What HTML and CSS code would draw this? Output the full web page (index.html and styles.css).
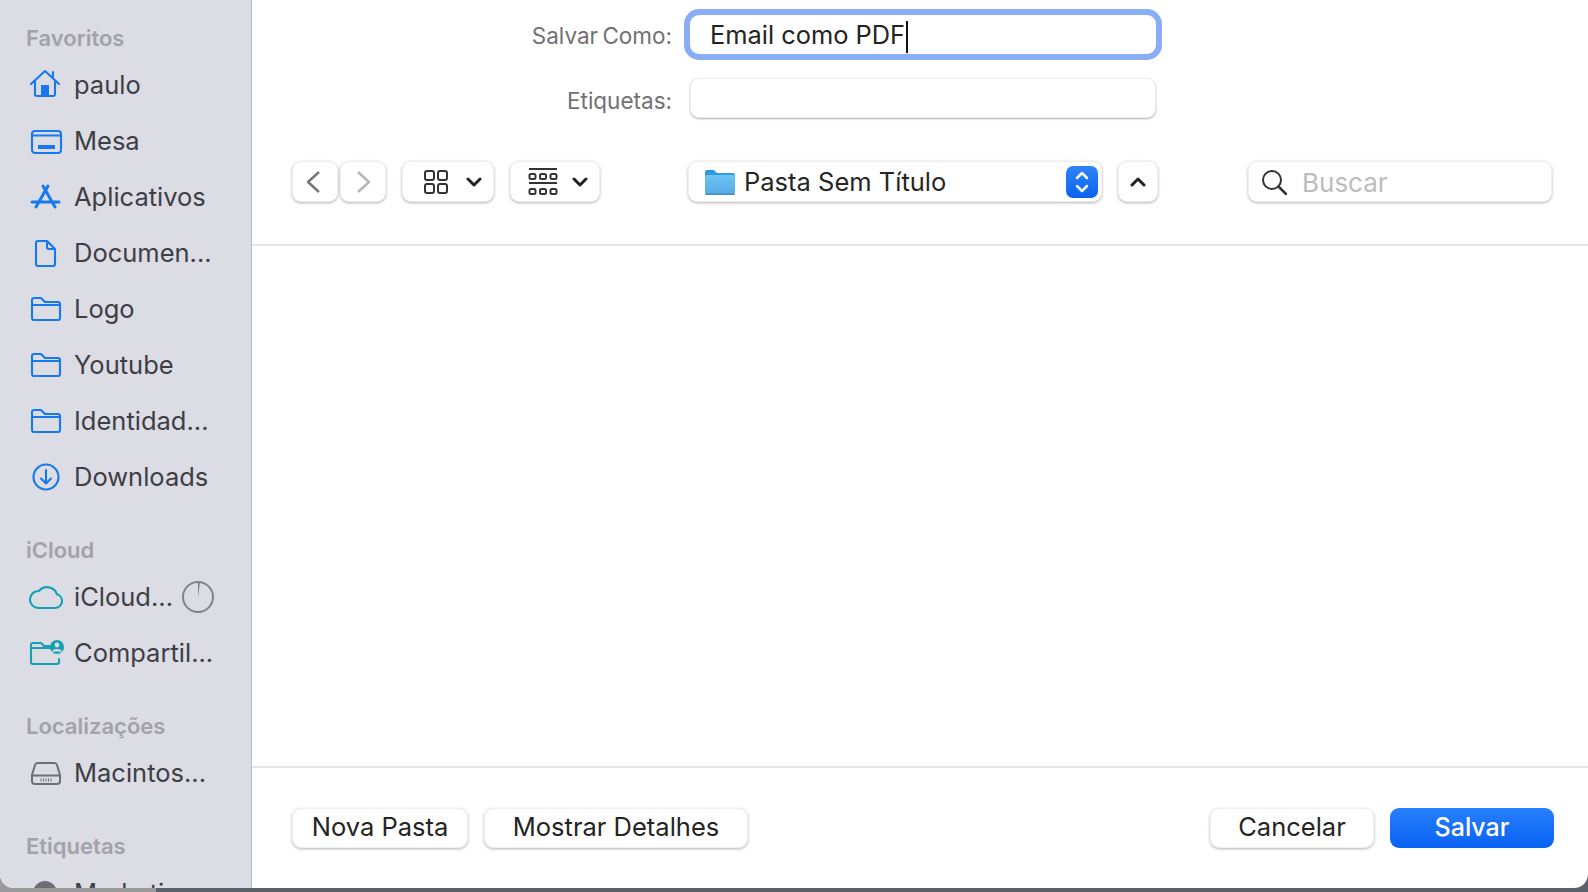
FILE: index.html
```html
<!DOCTYPE html>
<html lang="pt">
<head>
<meta charset="utf-8">
<title>Salvar Como</title>
<link rel="stylesheet" href="styles.css">
</head>
<body>
<div class="window">
  <aside class="sidebar">
    <section class="group">
      <h2 class="group-title">Favoritos</h2>
      <div class="item"><svg class="ico" viewBox="0 0 36 36"><path d="M4 17 18 4l14 13M8 14v13a2 2 0 0 0 2 2h16a2 2 0 0 0 2-2V14M26 10V5"/><rect class="solid" x="14" y="18" width="8" height="11"/></svg><span>paulo</span></div>
      <div class="item"><svg class="ico" viewBox="0 0 36 36"><rect x="5" y="8" width="29" height="22" rx="3"/><path d="M5 12.500h29"/><rect class="solid" x="11" y="22" width="17" height="4"/></svg><span>Mesa</span></div>
      <div class="item"><svg class="ico thick" viewBox="0 0 36 36"><path d="M16 7 28 28M21 7 9 28M5 23h27"/></svg><span>Aplicativos</span></div>
      <div class="item"><svg class="ico" viewBox="0 0 36 36"><path d="M11 6h9l8 8v15a2 2 0 0 1-2 2H11a2 2 0 0 1-2-2V8a2 2 0 0 1 2-2ZM20 6v6a2 2 0 0 0 2 2h6"/></svg><span>Documen...</span></div>
      <div class="item"><svg class="ico" viewBox="0 0 36 36"><path d="M5 14V9a2 2 0 0 1 2-2h7l4 4h13a2 2 0 0 1 2 2v14a2 2 0 0 1-2 2H7a2 2 0 0 1-2-2V14h28"/></svg><span>Logo</span></div>
      <div class="item"><svg class="ico" viewBox="0 0 36 36"><path d="M5 14V9a2 2 0 0 1 2-2h7l4 4h13a2 2 0 0 1 2 2v14a2 2 0 0 1-2 2H7a2 2 0 0 1-2-2V14h28"/></svg><span>Youtube</span></div>
      <div class="item"><svg class="ico" viewBox="0 0 36 36"><path d="M5 14V9a2 2 0 0 1 2-2h7l4 4h13a2 2 0 0 1 2 2v14a2 2 0 0 1-2 2H7a2 2 0 0 1-2-2V14h28"/></svg><span>Identidad...</span></div>
      <div class="item"><svg class="ico" viewBox="0 0 36 36"><circle cx="19" cy="18" r="12.500"/><path d="M19 11v13M14 19.500l5 5 5-5"/></svg><span>Downloads</span></div>
    </section>
    <section class="group">
      <h2 class="group-title">iCloud</h2>
      <div class="item"><svg class="ico teal" viewBox="0 0 36 36"><path d="M11 29h17a7 7 0 0 0 2-13.700A10.500 10.500 0 0 0 12 12 8.500 8.500 0 0 0 11 29Z"/></svg><span>iCloud...</span><svg class="quota" viewBox="0 0 34 34"><circle cx="17" cy="17" r="15"/><path class="wedge" d="M17 2.500h2L17 17Z"/></svg></div>
      <div class="item"><svg class="ico teal wide" viewBox="0 0 40 36"><path d="M24 13H4v-3a2 2 0 0 1 2-2h8l3 3h7M4 13v14a2 2 0 0 0 2 2h24a2 2 0 0 0 2-2v-3"/><circle class="solid" cx="30" cy="12" r="7"/><circle class="hole" cx="30" cy="10" r="2.400"/><path class="hole-line" d="M26 16.500c1-2.500 7-2.500 8 0"/></svg><span>Compartil...</span></div>
    </section>
    <section class="group">
      <h2 class="group-title">Localizações</h2>
      <div class="item"><svg class="ico gray" viewBox="0 0 36 36"><path d="M11 8h16a3 3 0 0 1 3 2l3 10v6a3 3 0 0 1-3 3H8a3 3 0 0 1-3-3v-6l3-10a3 3 0 0 1 3-2ZM5 20.500h28"/><path class="vents" d="M14 23.500v3M16.500 23.500v3M19 23.500v3M21.500 23.500v3M24 23.500v3"/></svg><span>Macintos...</span></div>
    </section>
    <section class="group">
      <h2 class="group-title">Etiquetas</h2>
      <div class="item"><span class="tag-dot"></span><span>Marketing</span></div>
    </section>
  </aside>

  <main class="panel">
    <header class="head">
      <div class="form-row first">
        <label class="form-label">Salvar Como:</label>
        <div class="field focused">Email como PDF<span class="caret"></span></div>
      </div>
      <div class="form-row second">
        <label class="form-label">Etiquetas:</label>
        <div class="field"></div>
      </div>
      <div class="toolbar">
        <div class="nav-pair">
          <div class="ctl nav"><svg class="glyph" width="16" height="24" viewBox="0 0 16 24"><path class="back" d="M12 2 1 12l11 10"/></svg></div>
          <div class="ctl nav"><svg class="glyph" width="16" height="24" viewBox="0 0 16 24"><path class="fwd" d="M3 2l11 10L3 22"/></svg></div>
        </div>
        <div class="ctl view view-a">
          <svg class="glyph" width="26" height="26" viewBox="0 0 26 26"><rect class="line" x="2" y="2" width="9" height="9" rx="2"/><rect class="line" x="15" y="2" width="9" height="9" rx="2"/><rect class="line" x="2" y="15" width="9" height="9" rx="2"/><rect class="line" x="15" y="15" width="9" height="9" rx="2"/></svg>
          <svg class="glyph" width="16" height="10" viewBox="0 0 16 10"><path class="chev" d="M2 2l6 6 6-6"/></svg>
        </div>
        <div class="ctl view view-b">
          <svg class="glyph" width="30" height="30" viewBox="0 0 30 30"><path class="line" d="M1 2h28M1 16h28"/><rect class="line" x="1.500" y="7" width="6" height="5" rx="1.500"/><rect class="line" x="12" y="7" width="6" height="5" rx="1.500"/><rect class="line" x="22.500" y="7" width="6" height="5" rx="1.500"/><rect class="line" x="1.500" y="22" width="6" height="5" rx="1.500"/><rect class="line" x="12" y="22" width="6" height="5" rx="1.500"/><rect class="line" x="22.500" y="22" width="6" height="5" rx="1.500"/></svg>
          <svg class="glyph" width="16" height="10" viewBox="0 0 16 10"><path class="chev" d="M2 2l6 6 6-6"/></svg>
        </div>
        <div class="ctl popup">
          <svg class="glyph" width="30" height="26" viewBox="0 0 30 26"><defs><linearGradient id="fold" x1="0" y1="0" x2="0" y2="1"><stop offset="0" stop-color="#6cc4f4"/><stop offset="1" stop-color="#58ace8"/></linearGradient></defs><path fill="#2f9bdc" d="M0 3a2 2 0 0 1 2-2h7l3 3h16a2 2 0 0 1 2 2v4H0Z"/><rect fill="url(#fold)" x="0" y="6" width="30" height="19" rx="2"/><rect fill="#4a94c8" x="0" y="24" width="30" height="2" rx="1"/></svg>
          <span class="popup-text">Pasta Sem Título</span>
          <span class="stepper"><svg width="16" height="26" viewBox="0 0 16 26"><path class="step" d="M3 9l5-5 5 5M3 17l5 5 5-5"/></svg></span>
        </div>
        <div class="ctl up"><svg class="glyph" width="16" height="10" viewBox="0 0 16 10"><path class="chev" d="M2 8l6-6 6 6"/></svg></div>
        <div class="ctl search">
          <svg class="glyph" width="26" height="26" viewBox="0 0 26 26"><circle class="line" cx="11" cy="11" r="9"/><path class="line round" d="M17.500 17.500 25 25"/></svg>
          <span class="search-text">Buscar</span>
        </div>
      </div>
    </header>
    <div class="listing"></div>
    <footer class="foot">
      <button class="btn new-folder">Nova Pasta</button>
      <button class="btn details">Mostrar Detalhes</button>
      <button class="btn cancel">Cancelar</button>
      <button class="btn save">Salvar</button>
    </footer>
  </main>
</div>
</body>
</html>
```

FILE: styles.css
```css
* { box-sizing: border-box; }
html, body { margin: 0; height: 100%; }
body {
  height: 892px;
  overflow: hidden;
  font-family: Inter, "Noto Sans", sans-serif;
  background: linear-gradient(to right, #9b9b9b 156px, #5b626c 156px);
}
.window {
  display: flex;
  height: 888px;
  background: #fff;
  border-radius: 0 0 14px 14px;
  overflow: hidden;
}
.sidebar {
  width: 252px;
  flex: none;
  background: #dcdce4;
  border-right: 1px solid #bdbdc8;
  padding: 24px 0 0 27px;
  color: #3e3e45;
  overflow: hidden;
}
.group + .group { margin-top: 31px; }
.group-title {
  margin: 0 0 5px -1px;
  height: 28px;
  line-height: 28px;
  font-size: 22px;
  font-weight: 600;
  color: #a2a2aa;
}
.item {
  display: flex;
  align-items: center;
  gap: 11px;
  height: 56px;
  font-size: 25.500px;
  white-space: nowrap;
}
.item > span:last-of-type { margin-top: -2px; }
.ico {
  width: 36px;
  height: 36px;
  flex: none;
  fill: none;
  stroke: #1878ee;
  stroke-width: 2.100;
  stroke-linejoin: round;
  stroke-linecap: round;
}
.ico.thick { stroke-width: 3; }
.ico .solid { fill: #1878ee; stroke: none; }
.ico.teal { stroke: #16a0b4; }
.ico.teal .solid { fill: #16a0b4; }
.ico.wide { width: 40px; margin-right: -4px; }
.ico .hole { fill: #dcdce4; stroke: none; }
.ico .hole-line { fill: #dcdce4; stroke: #dcdce4; stroke-width: 1.500; }
.ico.gray { stroke: #6e6e74; stroke-width: 2; }
.ico .vents { stroke-width: 1; stroke-linecap: butt; }
.quota {
  width: 34px;
  height: 34px;
  margin: -1px 0 0 -3px;
  flex: none;
  fill: none;
  stroke: #828288;
  stroke-width: 2;
}
.quota .wedge { fill: #828288; stroke: none; }
.tag-dot {
  width: 24px;
  height: 24px;
  margin: 0 6px;
  border-radius: 50%;
  background: #6e6e74;
  flex: none;
}
.panel {
  flex: 1;
  display: flex;
  flex-direction: column;
  min-width: 0;
}
.head {
  height: 246px;
  flex: none;
  border-bottom: 2px solid #e6e6e6;
  padding-top: 15px;
}
.form-row { display: flex; align-items: center; gap: 18px; }
.form-row.second { margin-top: 24px; }
.form-label {
  width: 420px;
  text-align: right;
  font-size: 22.500px;
  word-spacing: -2px;
  color: #717171;
}
.first .form-label { margin-top: 2px; }
.second .form-label { margin-top: 4px; }
.field {
  width: 466px;
  height: 40px;
  background: #fff;
  border: 1px solid #ececec;
  border-radius: 9px;
  box-shadow: 0 1px 2px rgba(0, 0, 0, .32);
}
.field.focused {
  height: 39px;
  border: none;
  border-radius: 9px;
  box-shadow: 0 0 0 6px #8aaef5;
  padding-left: 20px;
  font-size: 25.400px;
  line-height: 39px;
  color: #232323;
}
.caret {
  display: inline-block;
  width: 2px;
  height: 32px;
  margin-left: 1px;
  vertical-align: middle;
  background: #111;
}
.toolbar {
  display: flex;
  align-items: stretch;
  height: 41px;
  margin-top: 43px;
  padding: 0 36px 0 40px;
}
.ctl {
  display: flex;
  align-items: center;
  background: #fff;
  border: 1px solid #efefef;
  border-radius: 9px;
  box-shadow: 0 1px 3px rgba(0, 0, 0, .3);
}
.glyph { flex: none; fill: none; stroke-linejoin: round; }
.line { stroke: #333; stroke-width: 2; fill: none; }
.round { stroke-linecap: round; stroke-width: 2.500; }
.chev { stroke: #222; stroke-width: 3; fill: none; stroke-linecap: round; stroke-linejoin: round; }
.back { stroke: #777; stroke-width: 2.500; }
.fwd { stroke: #b6b6b6; stroke-width: 2.500; }
.nav-pair { display: flex; gap: 2px; }
.nav { width: 46px; justify-content: center; }
.view { margin-left: 16px; justify-content: space-between; }
.view-a { width: 92px; padding: 0 11px 0 20px; }
.view-b { width: 90px; padding: 0 11px 0 17px; }
.popup {
  width: 414px;
  margin-left: 88px;
  padding: 0 3px 0 16px;
  font-size: 25.500px;
  color: #262626;
}
.popup-text { margin: -1px 0 0 9px; flex: 1; }
.stepper {
  display: flex;
  align-items: center;
  justify-content: center;
  width: 32px;
  height: 32px;
  border-radius: 7px;
  background: linear-gradient(#2f84f8, #0a62f0);
}
.step { stroke: #fff; stroke-width: 2.500; fill: none; stroke-linecap: round; stroke-linejoin: round; }
.up { width: 40px; margin-left: 16px; justify-content: center; }
.search {
  width: 304px;
  margin-left: auto;
  padding-left: 12px;
  font-size: 26px;
  color: #bcbcbc;
}
.search-text { margin: 2px 0 0 15px; }
.listing { flex: 1; background: #fff; }
.foot {
  display: flex;
  gap: 16px;
  height: 122px;
  flex: none;
  border-top: 2px solid #e6e6e6;
  padding: 40px 34px 40px 40px;
}
.btn {
  height: 40px;
  padding: 0 0 3px;
  font: 25.500px Inter, "Noto Sans", sans-serif;
  color: #242424;
  background: #fff;
  border: 1px solid #efefef;
  border-radius: 9px;
  box-shadow: 0 1px 3px rgba(0, 0, 0, .3);
}
.new-folder { width: 176px; }
.details { width: 264px; }
.cancel { width: 164px; margin-left: auto; }
.save {
  width: 164px;
  color: #fff;
  border: none;
  box-shadow: none;
  background: linear-gradient(#2680fb, #0a62f4);
  font-size: 25px;
  font-weight: 500;
}
```
